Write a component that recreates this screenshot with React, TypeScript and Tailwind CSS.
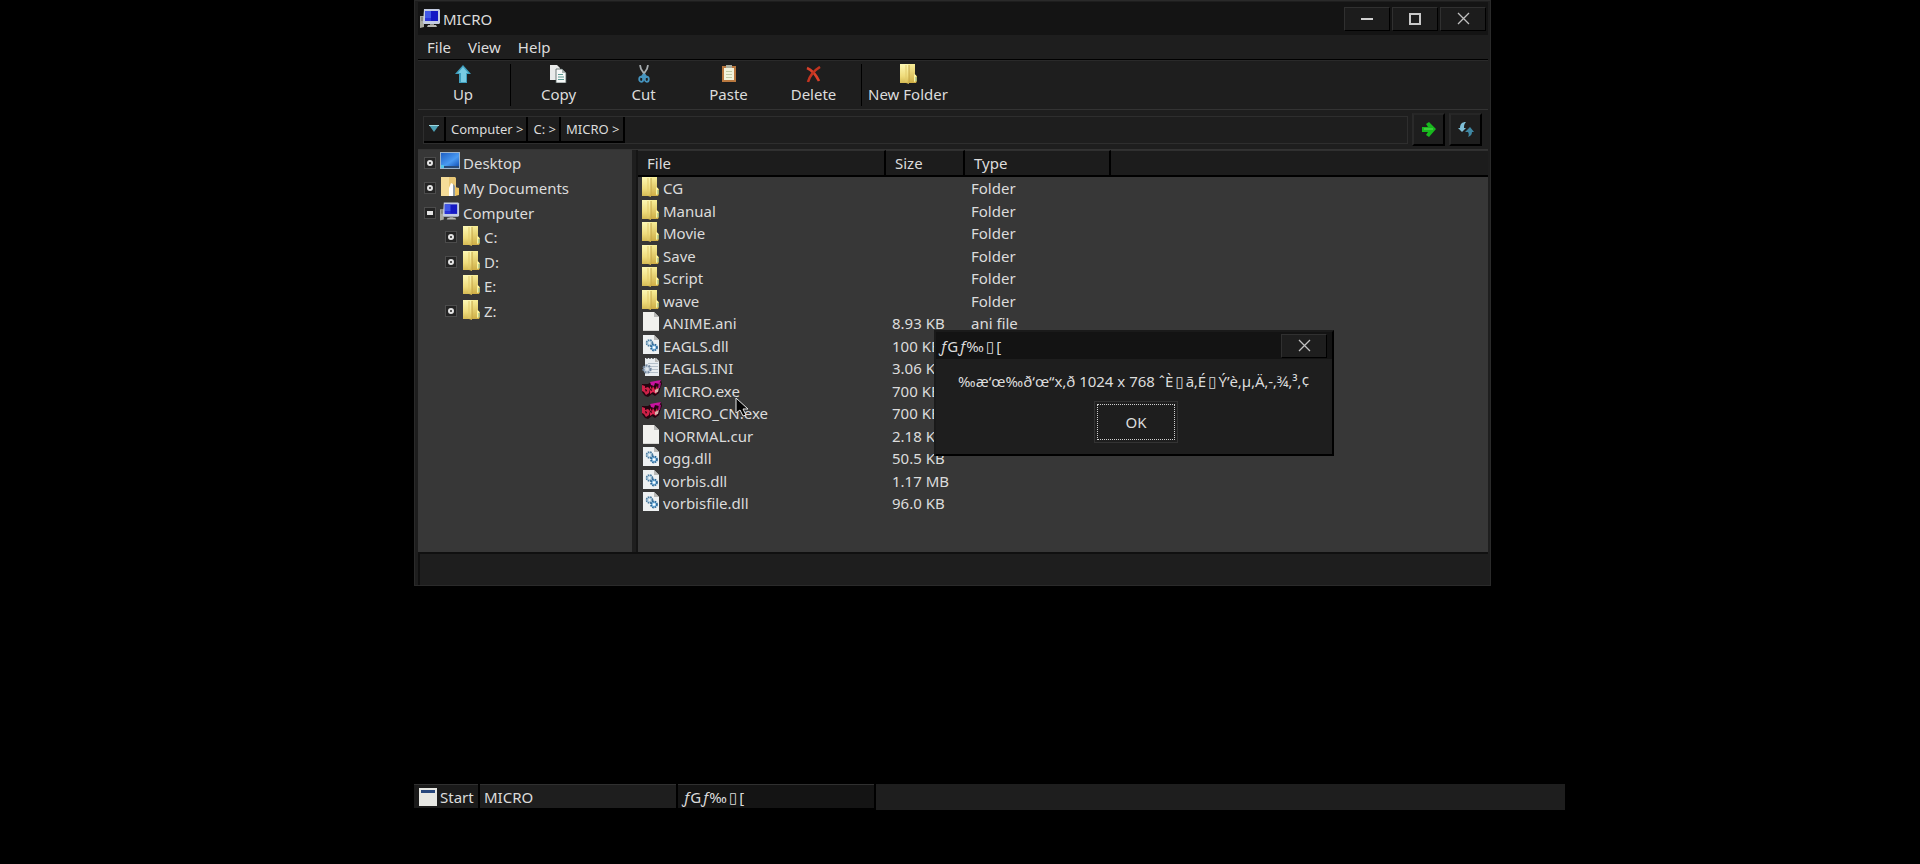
import React from 'react';
import clsx from 'clsx';

type IconKind = 'folder' | 'blank' | 'dll' | 'ini' | 'exe' | 'desktop' | 'documents' | 'computer';

interface FileEntry {
  name: string;
  size: string;
  type: string;
  icon: IconKind;
}

interface TreeEntry {
  label: string;
  icon: IconKind;
  state: 'open' | 'closed' | 'leaf';
  children?: TreeEntry[];
}

const files: FileEntry[] = [
  { name: 'CG', size: '', type: 'Folder', icon: 'folder' },
  { name: 'Manual', size: '', type: 'Folder', icon: 'folder' },
  { name: 'Movie', size: '', type: 'Folder', icon: 'folder' },
  { name: 'Save', size: '', type: 'Folder', icon: 'folder' },
  { name: 'Script', size: '', type: 'Folder', icon: 'folder' },
  { name: 'wave', size: '', type: 'Folder', icon: 'folder' },
  { name: 'ANIME.ani', size: '8.93 KB', type: 'ani file', icon: 'blank' },
  { name: 'EAGLS.dll', size: '100 KB', type: '', icon: 'dll' },
  { name: 'EAGLS.INI', size: '3.06 KB', type: '', icon: 'ini' },
  { name: 'MICRO.exe', size: '700 KB', type: '', icon: 'exe' },
  { name: 'MICRO_CN.exe', size: '700 KB', type: '', icon: 'exe' },
  { name: 'NORMAL.cur', size: '2.18 KB', type: '', icon: 'blank' },
  { name: 'ogg.dll', size: '50.5 KB', type: '', icon: 'dll' },
  { name: 'vorbis.dll', size: '1.17 MB', type: '', icon: 'dll' },
  { name: 'vorbisfile.dll', size: '96.0 KB', type: '', icon: 'dll' },
];

const tree: TreeEntry[] = [
  { label: 'Desktop', icon: 'desktop', state: 'closed' },
  { label: 'My Documents', icon: 'documents', state: 'closed' },
  {
    label: 'Computer',
    icon: 'computer',
    state: 'open',
    children: [
      { label: 'C:', icon: 'folder', state: 'closed' },
      { label: 'D:', icon: 'folder', state: 'closed' },
      { label: 'E:', icon: 'folder', state: 'leaf' },
      { label: 'Z:', icon: 'folder', state: 'closed' },
    ],
  },
];

// Shift-JIS strings shown through the Latin code page
const dialogTitle = 'ƒGƒ‰▯[';
const dialogMessage = '‰æ‘œ‰ð‘œ“x‚ð 1024 x 768 ˆÈ▯ã‚É▯Ý’è‚µ‚Ä‚-‚¾‚³‚¢';

const raised = 'border border-t-[#303030] border-l-[#303030] border-r-black border-b-black';

// Unmapped characters are drawn as boxes, florins slanted, both with a bit of room
const RawText: React.FC<{ text: string }> = ({ text }) => (
  <span className="[font-kerning:none]">
    {text.split(/([▯ƒ])/).map((part, index) => {
      if (part === '▯') return <span key={index} className="px-[2px]">▯</span>;
      if (part === 'ƒ') return <span key={index} className="px-px italic">ƒ</span>;
      return part;
    })}
  </span>
);

const FolderIcon = () => (
  <svg width="17" height="20" viewBox="0 0 17 20">
    <defs>
      <linearGradient id="flap" x1="0" y1="0" x2="0" y2="1">
        <stop offset="0" stopColor="#fdf8b4" />
        <stop offset="0.6" stopColor="#efdc7c" />
        <stop offset="1" stopColor="#d2b64e" />
      </linearGradient>
      <linearGradient id="back" x1="0" y1="0" x2="0" y2="1">
        <stop offset="0" stopColor="#f8ee98" />
        <stop offset="1" stopColor="#cfae45" />
      </linearGradient>
    </defs>
    <path d="M7 0h8v11l2 1v5l-1 2H8z" fill="url(#back)" />
    <path d="M0 0h7l2 1v19l-3-1H0z" fill="url(#flap)" />
    <path d="M9 1v18" stroke="#c4a548" strokeWidth="1" />
    <path d="M6 1v17" stroke="#e2cb6c" strokeWidth="1" />
    <path d="M14 10l2 1v6l-2 1z" fill="#fbf3a0" />
    <path d="M16 13v4" stroke="#7fae8a" strokeWidth="1" />
  </svg>
);

const PageIcon = () => (
  <svg width="18" height="20" viewBox="0 0 18 20">
    <path d="M1 0h11l5 5v14H1z" fill="#f1f1ee" />
    <path d="M12 0l5 5h-5z" fill="#b9bab8" />
    <path d="M1 18.5h16" stroke="#d5d5d2" />
  </svg>
);

const DllIcon = () => (
  <svg width="18" height="20" viewBox="0 0 18 20">
    <path d="M1 0h11l5 5v14H1z" fill="#eef1f2" />
    <path d="M12 0l5 5h-5z" fill="#b9bab8" />
    <circle cx="7.5" cy="8" r="3" fill="#b9d3e4" stroke="#4a7a9e" strokeWidth="1.6" strokeDasharray="1.6 0.8" />
    <circle cx="7.5" cy="8" r="1" fill="#eef6fa" />
    <circle cx="12" cy="12.5" r="3" fill="#8cc4ea" stroke="#2c6899" strokeWidth="1.8" strokeDasharray="1.6 0.8" />
    <circle cx="12" cy="12.5" r="1.2" fill="#fff" />
  </svg>
);

const IniIcon = () => (
  <svg width="18" height="20" viewBox="0 0 18 20">
    <path d="M3 1h11l3 3v15H3z" fill="#e8edf0" />
    <path d="M4 1.5h10" stroke="#77797b" strokeDasharray="2 1" />
    <path d="M13 1l4 4h-4z" fill="#b9bab8" />
    <path d="M6 6.5h10M9 9.5h7M10 12.5h6M8 15.5h8" stroke="#b4c0ca" />
    <circle cx="5" cy="12" r="3.6" fill="#c5d2df" stroke="#7388a0" strokeWidth="2.2" strokeDasharray="2 1" />
    <circle cx="5" cy="12" r="1.5" fill="#dfe6ed" />
  </svg>
);

const ExeIcon = () => (
  <svg width="20" height="20" viewBox="0 0 20 20">
    <path d="M0 4l6 0 3-2 4 0 6-2 1 4-2 5-1 4-4 3-3-2-4 3-3-1-3-4z" fill="#24040f" />
    <path d="M0 5l3 1v2l3-1 2 2-1 4-3 2-2-3-2-1z" fill="#cf2148" />
    <path d="M8 2l11-2-2 4-4-1-1 3-3-1z" fill="#c814a0" />
    <path d="M8 6l2 3 1-3 2 4 2-4 1 4-2 4-3-2-3 2z" fill="#dd2450" />
    <path d="M13 10l4-2-1 4-3 1z" fill="#d4b4ac" />
    <path d="M3 9l2 1-1 2zM9 8l1 3-2-1zM13 5l1 2-2 0z" fill="#12020a" />
    <path d="M17 2l2 1-1 5-2 0z" fill="#a3107e" />
  </svg>
);

const DesktopIcon = () => (
  <svg width="20" height="18" viewBox="0 0 20 18">
    <defs>
      <linearGradient id="sky" x1="0" y1="0" x2="1" y2="1">
        <stop offset="0" stopColor="#1d5fc4" />
        <stop offset="0.6" stopColor="#4a9af2" />
        <stop offset="1" stopColor="#1554b8" />
      </linearGradient>
    </defs>
    <path d="M0 0h20v17H0z" fill="#9db4cc" />
    <path d="M1 1h18v13H1z" fill="url(#sky)" />
    <path d="M1 14h18v2H1z" fill="#284a77" />
    <path d="M1 13h3v3H1z" fill="#4fc3e8" />
  </svg>
);

const DocumentsIcon = () => (
  <svg width="19" height="20" viewBox="0 0 19 20">
    <path d="M0 0h14l1 1v18H0z" fill="#e9c877" />
    <path d="M0 0h8v19H0z" fill="#f5dc98" />
    <path d="M8 19V11l2-5 2 1v12z" fill="#fff" />
    <path d="M12 19V7l2 2v10z" fill="#8d9aa5" />
    <path d="M14 10l4 1v7l-4 1z" fill="#edc35f" />
  </svg>
);

const ComputerIcon = () => (
  <svg width="21" height="20" viewBox="0 0 21 20">
    <path d="M0 7h4v11l-4 1z" fill="#a9a99f" />
    <path d="M1 9h2M1 11h2" stroke="#66665f" />
    <path d="M4 0h15l1 1v13l-1 1H4l-1-1z" fill="#c3cbe2" />
    <path d="M5 2h13v10H5z" fill="#1418c4" />
    <path d="M5 2h6v7H5z" fill="#4057e8" />
    <path d="M5 9h6v3H5z" fill="#2a34d8" />
    <path d="M10 15h4v2h-4z" fill="#8d8d8a" />
    <path d="M8 16h8l1 2H7z" fill="#b8b8b2" />
  </svg>
);

const icons: Record<IconKind, React.FC> = {
  folder: FolderIcon,
  blank: PageIcon,
  dll: DllIcon,
  ini: IniIcon,
  exe: ExeIcon,
  desktop: DesktopIcon,
  documents: DocumentsIcon,
  computer: ComputerIcon,
};

const UpIcon = () => (
  <svg width="16" height="18" viewBox="0 0 16 18">
    <path d="M8 0l8 9h-4v9H4V9H0z" fill="#3f9fbe" />
    <path d="M8 2l5 6h-2v9H6V8H3z" fill="#78cbe2" />
  </svg>
);

const CopyIcon = () => (
  <svg width="17" height="18" viewBox="0 0 17 18">
    <path d="M0 0h7l3 3v12H0z" fill="#e9ebea" />
    <path d="M6 4h6l4 4v10H6z" fill="#f6f8f7" stroke="#4f5a5a" strokeWidth="0.8" />
    <path d="M12 4v4h4z" fill="#a9b3b1" />
    <path d="M8 9.5h5M8 12h6M8 14.5h6" stroke="#5b9a92" />
  </svg>
);

const CutIcon = () => (
  <svg width="12" height="18" viewBox="0 0 12 18" fill="none">
    <path d="M2 0l1 4 4 6M10 0L9 4l-4 6" stroke="#a7adb0" strokeWidth="1.8" />
    <ellipse cx="3.2" cy="14.2" rx="2" ry="2.6" stroke="#4594bf" strokeWidth="1.8" />
    <ellipse cx="8.8" cy="14.2" rx="2" ry="2.6" stroke="#4594bf" strokeWidth="1.8" />
    <path d="M3 11l3-3 3 3v2H3z" fill="#4594bf" />
  </svg>
);

const PasteIcon = () => (
  <svg width="14" height="18" viewBox="0 0 14 18">
    <path d="M0 1h14v16H0z" fill="#b9783f" />
    <path d="M2 3h10v12H2z" fill="#f2f3dc" />
    <path d="M4 0h6v3H4z" fill="#a9ab9c" />
    <path d="M4 6.5h6M4 9.5h6M4 12.5h6" stroke="#c2cba5" />
  </svg>
);

const DeleteIcon = () => (
  <svg width="15" height="17" viewBox="0 0 15 17" fill="none">
    <path d="M1 2c5 2 9 7 12 13" stroke="#d8402a" strokeWidth="2.6" />
    <path d="M14 1C9 4 4 9 2 16" stroke="#c23420" strokeWidth="2.6" />
  </svg>
);

const RunIcon = () => (
  <svg width="14" height="15" viewBox="0 0 14 15">
    <path d="M0 5h6L4 2l3-2 7 7-7 8-3-2 2-3H0z" fill="#18b81e" />
    <path d="M2 7h9" stroke="#5fe455" />
  </svg>
);

const RefreshIcon = () => (
  <svg width="16" height="15" viewBox="0 0 16 15">
    <path d="M8 0C4 0 2 2 2 6H0l4 4 4-4H6c0-2 0-4 2-6z" fill="#7fc0d8" />
    <path d="M10 15c3-1 4-3 4-5h2l-4-5-5 5h3c1 2 1 3 0 5z" fill="#3f87a3" />
  </svg>
);

const CloseGlyph = () => (
  <svg width="13" height="13" viewBox="0 0 13 13">
    <path d="M1 1l11 11M12 1L1 12" stroke="#c0c0c0" strokeWidth="1.3" />
  </svg>
);

const StartIcon = () => (
  <svg width="18" height="18" viewBox="0 0 18 18">
    <path d="M0 0h18v18H0z" fill="#e6e7e3" />
    <path d="M2 2h14v3H2z" fill="#27477c" />
  </svg>
);

interface ToolButtonProps {
  label: string;
  icon: React.ReactNode;
  className: string;
}

const ToolButton: React.FC<ToolButtonProps> = ({ label, icon, className }) => (
  <button className={clsx('flex flex-col items-center whitespace-nowrap pt-[3px]', className)}>
    <span className="flex h-5 items-center">{icon}</span>
    <span className="leading-5">{label}</span>
  </button>
);

const TreeNode: React.FC<{ entry: TreeEntry; nested?: boolean }> = ({ entry, nested }) => {
  const Icon = icons[entry.icon];
  return (
    <li className="group">
      <div className={clsx('flex items-center', nested ? 'h-6 pl-[26px] group-even:h-[25px]' : 'h-[25px] pl-[5px]')}>
        {entry.state === 'leaf' ? (
          <span className="w-3" />
        ) : (
          <button
            aria-label={`Toggle ${entry.label}`}
            className="flex size-3 items-center justify-center border border-[#4c4c4c] bg-[#242424]"
          >
            <span className={clsx('w-[6px] border-2 border-[#e4e4e4]', entry.state === 'open' ? 'h-1' : 'h-[6px] rounded-sm')} />
          </button>
        )}
        <span className="ml-1 mr-[3px] flex h-[22px] w-5 items-start justify-center">
          <Icon />
        </span>
        <span>{entry.label}</span>
      </div>
      {entry.children && (
        <ul>
          {entry.children.map((child) => (
            <TreeNode key={child.label} entry={child} nested />
          ))}
        </ul>
      )}
    </li>
  );
};

const MessageDialog = () => (
  <div
    role="dialog"
    aria-label={dialogTitle}
    className="absolute left-[520px] top-[330px] w-[400px] border-2 border-t-[#1a1a1a] border-l-[#1a1a1a] border-r-black border-b-black bg-[#1e1e1e]"
  >
    <div className="flex h-[27px] items-center justify-between bg-[#131313] pl-[3px] pr-[5px]">
      <span><RawText text={dialogTitle} /></span>
      <button aria-label="Close" className={clsx('flex h-6 w-[46px] items-center justify-center bg-[#1e1e1e]', raised)}>
        <CloseGlyph />
      </button>
    </div>
    <p className="mt-[11px] whitespace-nowrap text-center leading-[22px]"><RawText text={dialogMessage} /></p>
    <div className="flex justify-center pb-[11px] pl-1 pt-[9px]">
      <button className="h-[42px] w-[84px] border border-[#333] bg-[#1e1e1e] p-[2px]">
        <span className="flex h-full items-center justify-center border border-dotted border-[#d0d0d0]">OK</span>
      </button>
    </div>
  </div>
);

const Explorer = () => (
  <section className="mr-[74px] border-b border-l-[4px] border-r-[3px] border-t-2 border-[#1e1e1e] bg-[#1e1e1e] outline outline-1 -outline-offset-1 outline-[#2a2a2a]">
    {/* Title bar */}
    <header className="flex h-[33px] items-center justify-between bg-[#141414] pl-[2px] pr-[2px]">
      <div className="flex items-center gap-[2px]">
        <ComputerIcon />
        <h1>MICRO</h1>
      </div>
      <div className="flex gap-[2px]">
        <button aria-label="Minimize" className={clsx('flex h-6 w-[46px] items-center justify-center bg-[#1c1c1c]', raised)}>
          <span className="h-[2px] w-3 bg-[#d0d0d0]" />
        </button>
        <button aria-label="Maximize" className={clsx('flex h-6 w-[46px] items-center justify-center bg-[#1c1c1c]', raised)}>
          <span className="size-3 border-2 border-[#c8c8c8]" />
        </button>
        <button aria-label="Close" className={clsx('flex h-6 w-[46px] items-center justify-center bg-[#1c1c1c]', raised)}>
          <CloseGlyph />
        </button>
      </div>
    </header>

    <nav className="flex h-[25px] items-center gap-[17px] border-b border-black pl-[9px]">
      <button>File</button>
      <button>View</button>
      <button>Help</button>
    </nav>

    {/* Toolbar */}
    <div className="flex h-[49px] items-stretch border-t border-[#2a2a2a]">
      <ToolButton label="Up" icon={<UpIcon />} className="mr-[2px] w-[90px]" />
      <span className="my-[3px] w-px bg-black" />
      <div className="flex px-[5px]">
        <ToolButton label="Copy" icon={<CopyIcon />} className="w-[85px]" />
        <ToolButton label="Cut" icon={<CutIcon />} className="w-[85px]" />
        <ToolButton label="Paste" icon={<PasteIcon />} className="w-[85px]" />
        <ToolButton label="Delete" icon={<DeleteIcon />} className="w-[85px]" />
      </div>
      <span className="my-[3px] w-px bg-black" />
      <ToolButton label="New Folder" icon={<FolderIcon />} className="w-[92px]" />
    </div>

    {/* Address bar */}
    <div className="flex h-[41px] items-center gap-1 border-y border-[#333] pl-[5px] pr-[6px] text-[13px]">
      <div className="flex h-7 flex-1 items-start border border-[#2e2e2e]">
        <button aria-label="History" className="flex h-[26px] w-[22px] items-center justify-center border-b-2 border-r-2 border-black">
          <svg width="10" height="7" viewBox="0 0 10 7">
            <path d="M0 0h10L5 7z" fill="#4c9fb3" />
            <path d="M0 .5h10" stroke="#9fd6df" />
          </svg>
        </button>
        <a href="#computer" className="flex h-[26px] items-center border-b-2 border-r-2 border-black pl-[5px] pr-[3px]">Computer &gt;</a>
        <a href="#c" className="flex h-[26px] items-center border-b-2 border-r-2 border-black pl-[5px] pr-[3px]">C: &gt;</a>
        <a href="#micro" className="flex h-[26px] items-center border-b-2 border-r-2 border-black pl-[5px] pr-[3px]">MICRO &gt;</a>
      </div>
      <button aria-label="Go" className="flex size-[33px] items-center justify-center border-2 border-b-black border-l-[#2a2a2a] border-r-black border-t-[#262626]">
        <RunIcon />
      </button>
      <button aria-label="Refresh" className="flex size-[33px] items-center justify-center border-2 border-b-black border-l-[#2a2a2a] border-r-black border-t-[#262626]">
        <RefreshIcon />
      </button>
    </div>

    <div className="flex">
      <aside className="w-[214px] bg-[#373737]">
        <ul className="pl-px">
          {tree.map((entry) => (
            <TreeNode key={entry.label} entry={entry} />
          ))}
        </ul>
      </aside>
      <div className="ml-1 flex-1 border-l-2 border-[#151515] bg-[#373737] pb-[38px]">
        <table className="w-full table-fixed border-separate border-spacing-0 text-left">
          <colgroup>
            <col className="w-[248px]" />
            <col className="w-[79px]" />
            <col className="w-[146px]" />
            <col />
          </colgroup>
          <thead>
            <tr className="h-[27px] bg-[#1c1c1c]">
              {['File', 'Size', 'Type'].map((heading) => (
                <th key={heading} className="border-b-2 border-r-2 border-t border-b-black border-r-black border-t-[#303030] p-0 pl-[9px] font-normal">
                  {heading}
                </th>
              ))}
              <td className="border-b-2 border-t border-b-black border-t-[#303030] p-0" />
            </tr>
          </thead>
          <tbody>
            {files.map((file) => {
              const Icon = icons[file.icon];
              return (
                <tr key={file.name} className="h-[22px] even:h-[23px]">
                  <td className="p-0 pl-1">
                    <div className="flex h-[22px] items-start gap-px">
                      <span className="w-5">
                        <Icon />
                      </span>
                      {file.name}
                    </div>
                  </td>
                  <td className="whitespace-nowrap p-0 pl-[6px] leading-[22px]">{file.size}</td>
                  <td className="p-0 pl-[6px] leading-[22px]">{file.type}</td>
                  <td className="p-0" />
                </tr>
              );
            })}
          </tbody>
        </table>
      </div>
    </div>

    <footer className="h-[33px] border-l-2 border-t-2 border-[#101010]" />
  </section>
);

const Taskbar = () => (
  <nav className="mt-auto flex h-[26px] items-start gap-[2px]">
    <button className="flex h-6 w-[64px] items-center gap-[3px] border-t border-[#303030] bg-[#1a1a1a] pl-[5px]">
      <StartIcon />
      Start
    </button>
    <button className="h-6 w-[196px] border-t border-[#303030] bg-[#1e1e1e] pl-1 text-left leading-[22px]">MICRO</button>
    <button className="h-6 w-[196px] border-t border-[#303030] bg-[#141414] pl-1 text-left leading-[22px]">
      <RawText text={dialogTitle} />
    </button>
    <div className="h-full flex-1 bg-[#1e1e1e]" />
  </nav>
);

const App = () => (
  <div className="min-h-screen bg-black pl-[414px] pr-[355px] font-['Noto_Sans','DejaVu_Sans',sans-serif] text-[15px] leading-[22px] text-[#dcdcdc]">
    <main className="relative flex min-h-screen flex-col pb-[54px]">
      <Explorer />
      <Taskbar />
      <MessageDialog />
      <svg className="absolute left-[321px] top-[397px]" width="13" height="20" viewBox="0 0 13 20">
        <path d="M1 1v15l4-3 3 6 3-1-3-6h5z" fill="#050505" stroke="#e8e8e8" strokeWidth="1" />
      </svg>
    </main>
  </div>
);

export default App;
